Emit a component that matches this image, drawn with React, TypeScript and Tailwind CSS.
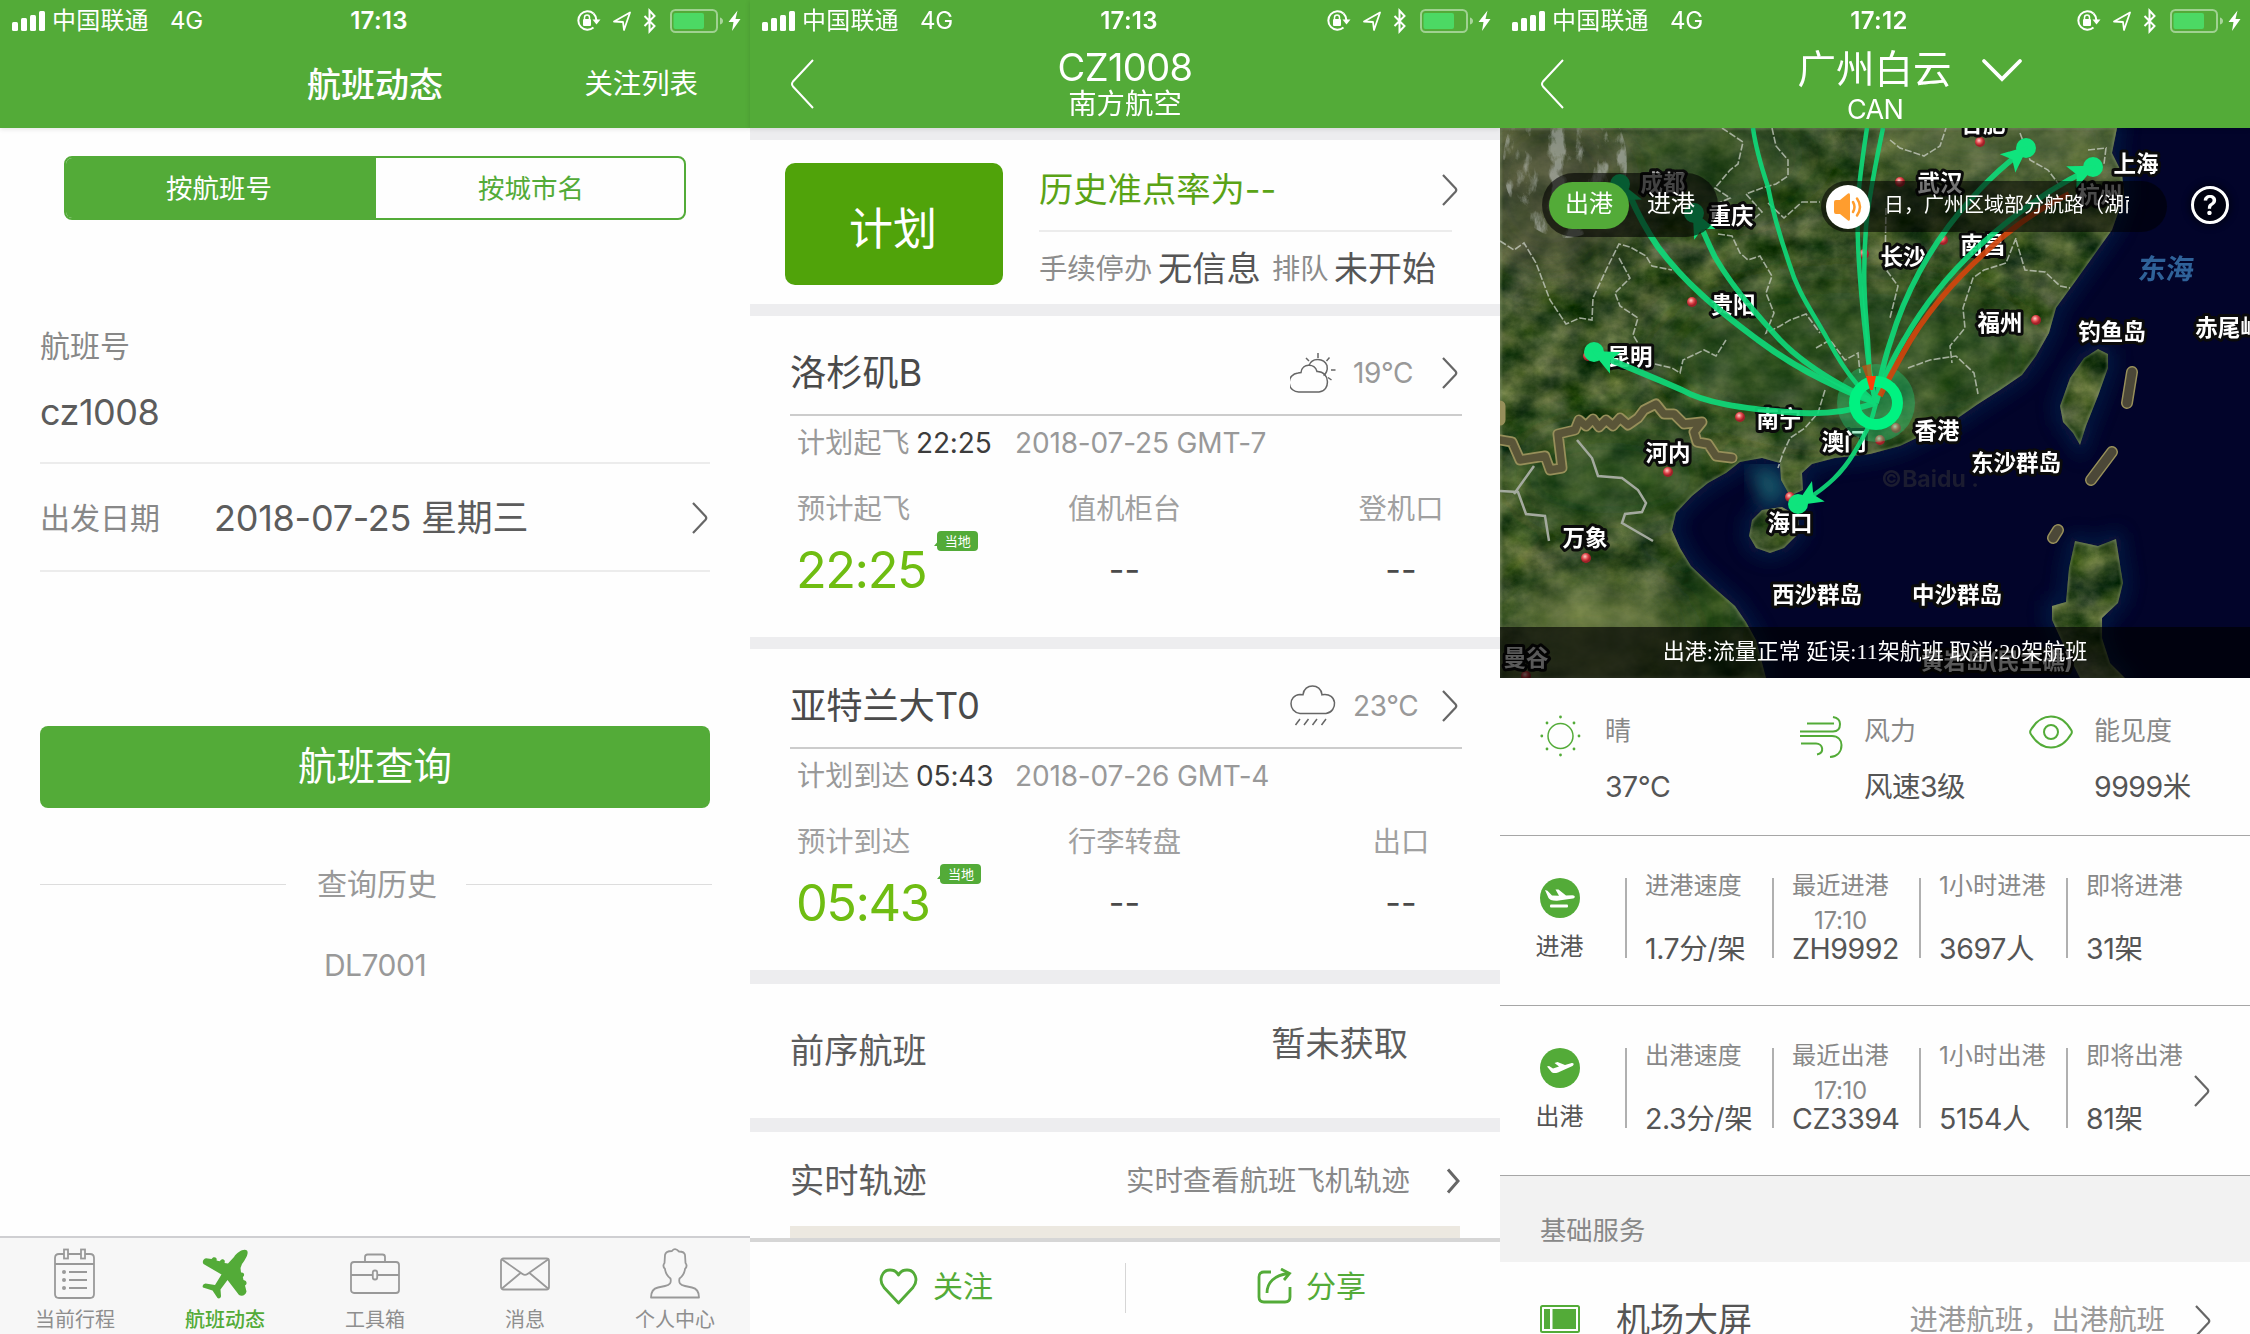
import type { ReactNode } from 'react';

/* ---------- shared pieces ---------- */

function ChevronRight({ className = '', width = 2.2 }: { className?: string; width?: number }) {
  return (
    <svg width="16" height="32" viewBox="0 0 16 32" fill="none" stroke="#666" strokeWidth={width} className={className}>
      <path d="M1 1 L13.5 14.2 Q15 16 13.5 17.8 L1 31" />
    </svg>
  );
}

function BackArrow() {
  return (
    <svg width="24" height="50" viewBox="0 0 24 50" fill="none" stroke="#fff" strokeWidth="2" className="absolute left-10 top-[59px]">
      <path d="M23 1 L3 22.5 Q1 25 3 27.5 L23 49" />
    </svg>
  );
}

function StatusBar({ time }: { time: string }) {
  return (
    <div className="flex h-[41px] items-center text-[24px] leading-none text-white">
      <svg width="33" height="20" viewBox="0 0 33 20" fill="#fff" className="ml-3 shrink-0">
        <rect x="0" y="11" width="6" height="9" rx="1.5" />
        <rect x="9" y="7" width="6" height="13" rx="1.5" />
        <rect x="18" y="4" width="6" height="16" rx="1.5" />
        <rect x="27" y="0" width="6" height="20" rx="1.5" />
      </svg>
      <span className="ml-[7px] w-[98px] shrink-0 tracking-[0.2px]">中国联通</span>
      <span className="ml-5 w-[60px] shrink-0 tracking-[-0.3px]">4G</span>
      <span className="ml-[116px] w-[66px] shrink-0 text-center font-semibold tracking-[0.3px]">{time}</span>
      <svg width="168" height="28" viewBox="0 0 168 28" fill="none" className="ml-[164px] shrink-0">
        <g stroke="#fff" strokeWidth="2">
          <path d="M17.5 6.5 A9.2 9.2 0 1 0 17.5 20.5" />
          <path d="M17.5 6.5 A9.2 9.2 0 0 1 20.3 13" />
        </g>
        <path d="M16.5 12.5 H24.5 L20.5 17.5 Z" fill="#fff" />
        <rect x="7" y="12" width="8" height="7" rx="1" fill="#fff" />
        <path d="M8.5 12 V10.5 A2.5 2.5 0 0 1 13.5 10.5 V12" stroke="#fff" strokeWidth="1.5" />
        <path d="M38 14.5 L54 5.5 L48 23 L47 15 Z" stroke="#fff" strokeWidth="1.8" strokeLinejoin="round" />
        <path d="M68.5 9 L78.5 19 L73.5 24.5 V3.5 L78.5 9 L68.5 19" stroke="#fff" strokeWidth="2" />
        <rect x="95" y="3" width="46" height="22" rx="4.5" stroke="#fff" strokeOpacity=".45" strokeWidth="2" />
        <rect x="97.5" y="6" width="30.5" height="16" rx="2" fill="#4cd964" />
        <path d="M144 10.5 Q147 11.5 147 14 Q147 16.5 144 17.5 Z" fill="#fff" fillOpacity=".5" />
        <path d="M161.5 3.5 L152.5 15 H157.5 L156 24 L164.5 12 H159.5 Z" fill="#fff" />
      </svg>
    </div>
  );
}

function Header({ time, back, children }: { time: string; back?: boolean; children: ReactNode }) {
  return (
    <header className="relative z-10 h-32 shrink-0 bg-[#53ab38] text-white shadow-[0_1px_5px_rgba(0,0,0,0.12)]">
      <StatusBar time={time} />
      {back && <BackArrow />}
      {children}
    </header>
  );
}

/* ---------- screen 1: flight search ---------- */

function CalendarIcon() {
  return (
    <svg width="42" height="52" viewBox="0 0 42 52" fill="none" stroke="#999" strokeWidth="1.8">
      <path d="M10 6 H5 Q1 6 1 10 V46 Q1 50 5 50 H36 Q40 50 40 46 V10 Q40 6 36 6 H31 M14 6 H27 M1 16 H40" />
      <rect x="10" y="1.5" width="4" height="9" />
      <rect x="27" y="1.5" width="4" height="9" />
      <path d="M15 24 H33 M15 32 H33 M15 40 H33" />
      <g fill="#999" stroke="none">
        <circle cx="10" cy="24" r="2" />
        <circle cx="10" cy="32" r="2" />
        <circle cx="10" cy="40" r="2" />
      </g>
    </svg>
  );
}

function PlaneIcon() {
  return (
    <svg width="46" height="50" viewBox="0 0 46 50" fill="#53ab38">
      <path d="M45 1.5 C42 -1 35 3 32 8 L26 14.5 L22.5 14 C23.5 11.5 22 9.5 19.5 10.5 L17.5 12.2 L14.5 11.5 C15.5 9 13 7.5 11 8.5 L9.5 10 L4 9.3 C1 10 0 13 1.5 15 L19.5 25.5 L13 36 L3.5 34.5 C1 35 0 37 1 38.5 L10.5 41.5 L15.5 49 C17 50 19 49 19 47 L18.5 40.5 L25.5 31 L37 46 C40 48 44 46 44.5 42.5 L43 36.5 C45.5 35 45 31.5 41.5 31 L40.8 28 C43 26.5 42.5 23 39 23.5 L38.5 19 L40 15 C44 10 47 4 45 1.5 Z" />
    </svg>
  );
}

function BriefcaseIcon() {
  return (
    <svg width="50" height="42" viewBox="0 0 50 42" fill="none" stroke="#999" strokeWidth="1.8">
      <rect x="1" y="9" width="48" height="31" rx="3" />
      <path d="M15 9 V4 Q15 1.5 17.5 1.5 H32.5 Q35 1.5 35 4 V9 M1 22 H22.5 M27.5 22 H49" />
      <rect x="22.8" y="17.5" width="4.4" height="9" rx="2" />
    </svg>
  );
}

function MailIcon() {
  return (
    <svg width="50" height="34" viewBox="0 0 50 34" fill="none" stroke="#999" strokeWidth="1.8">
      <rect x="1" y="1.5" width="48" height="31" rx="2.5" />
      <path d="M2 2.5 L22.5 17 Q25 18.8 27.5 17 L48 2.5 M2 31.5 L20.5 16 M48 31.5 L29.5 16" />
    </svg>
  );
}

function PersonIcon() {
  return (
    <svg width="50" height="51" viewBox="0 0 50 51" fill="none" stroke="#999" strokeWidth="1.8" strokeLinejoin="round">
      <path d="M20.5 30.5 C21.5 35 20 37 15 38 L8 39.5 C3 40.5 1 44 1 49.5 H49 C49 44 47 40.5 42 39.5 L35 38 C30 37 28.5 35 29.5 30.5 C33 28 34.5 25 35 21 C37 19 37 17 35.5 15 L35 7 C34.5 4 31 3.5 29 3.5 C26 .5 24 .5 22 3 C18 3 15.5 4 15 7 L14.5 15 C13 17 13 19 15 21 C15.5 25 17 28 20.5 30.5 Z" />
    </svg>
  );
}

const tabs = [
  { label: '当前行程', icon: <CalendarIcon />, active: false },
  { label: '航班动态', icon: <PlaneIcon />, active: true },
  { label: '工具箱', icon: <BriefcaseIcon />, active: false },
  { label: '消息', icon: <MailIcon />, active: false },
  { label: '个人中心', icon: <PersonIcon />, active: false },
];

function SearchScreen() {
  return (
    <section className="flex h-full w-[750px] shrink-0 flex-col bg-[#fefefe]">
      <Header time="17:13">
        <div className="grid h-[87px] grid-cols-[1fr_auto_1fr] items-center leading-none">
          <span />
          <h1 className="text-[34px] font-medium">航班动态</h1>
          <span className="mr-[52px] text-right text-[28.4px]">关注列表</span>
        </div>
      </Header>
      <div className="mx-16 mt-7 flex h-16 shrink-0 overflow-hidden rounded-lg border-2 border-[#53ab38] text-[26.5px] leading-[60px]">
        <div className="w-[310px] bg-[#53ab38] text-center text-white">
          <span className="mr-1">按航班号</span>
        </div>
        <div className="flex-1 pl-0.5 text-center text-[#53ab38]">按城市名</div>
      </div>
      <div className="mx-10 mt-[106px] flex h-[138px] shrink-0 flex-col border-b-2 border-[#ececec]">
        <span className="h-10 text-[30px] leading-10 text-[#888]">航班号</span>
        <span className="mt-[26px] text-[36px] leading-10 tracking-[-0.5px] text-[#5c5c5c]">cz1008</span>
      </div>
      <div className="mx-10 flex h-[108px] shrink-0 items-center border-b-2 border-[#ececec] pt-0.5 leading-none">
        <span className="w-[174px] text-[30px] text-[#888]">出发日期</span>
        <span className="text-[36px] tracking-[-0.25px] text-[#5c5c5c]">2018-07-25 星期三</span>
        <ChevronRight className="ml-auto mr-0.5" />
      </div>
      <div className="mx-10 mt-[154px] h-[82px] shrink-0 rounded-lg bg-[#53ab38] text-center text-[38.5px] leading-[81px] text-white">航班查询</div>
      <div className="mx-10 mt-[56px] flex h-10 shrink-0 items-center justify-between leading-none">
        <div className="h-px w-[246px] bg-[#ddd]" />
        <span className="pl-0.5 text-[30px] text-[#999]">查询历史</span>
        <div className="-mr-0.5 h-px w-[246px] bg-[#ddd]" />
      </div>
      <div className="mt-[41px] text-center text-[30px] leading-10 tracking-[-0.5px] text-[#999]">DL7001</div>
      <nav className="mt-auto grid h-[98px] shrink-0 grid-cols-5 border-t-2 border-[#cfcfd2] bg-[#f7f7f7]">
        {tabs.map((t) => (
          <div key={t.label} className="flex flex-col items-center">
            <div className="flex h-[71px] items-center">{t.icon}</div>
            <span className={t.active ? 'text-[20px] font-medium leading-[23px] text-[#53ab38]' : 'text-[20px] leading-[23px] text-[#8e8e8e]'}>{t.label}</span>
          </div>
        ))}
      </nav>
    </section>
  );
}

/* ---------- screen 2: flight detail ---------- */

function PartlyCloudyIcon() {
  return (
    <svg width="46" height="42" viewBox="0 0 46 42" fill="none" stroke="#666" strokeWidth="1.5">
      <path d="M9.5 40 A9.5 9.5 0 0 1 8 21 L11 20.5 C12 11 25 11 27 19.5 C40 19 41 39 29 40 Z" />
      <path d="M19 13.5 C22 5 34 6 37 13.5 C38 18 36 22 33.5 23.5 M28 1 V6 M16 6 L19 9 M39.5 5.5 L36.5 9 M41 18 H45.5 M38 25.5 L41.5 28" />
    </svg>
  );
}

function RainIcon() {
  return (
    <svg width="46" height="42" viewBox="0 0 46 42" fill="none" stroke="#666" strokeWidth="1.5">
      <path d="M10 28.5 C-2 27 -2 10 10 9.5 L13 9.8 C14 -2 31 -2 32 9.8 C48 7 48 27 36 28.5 Z" />
      <path d="M10 34 L5.5 40 M18.5 34 L14 40 M27 34 L22.5 40 M36 34 L31.5 40" />
    </svg>
  );
}

interface LegProps {
  city: string;
  icon: ReactNode;
  temp: string;
  kind: string;
  time: string;
  date: string;
  mid: string;
  last: string;
}

function Leg({ city, icon, temp, kind, time, date, mid, last }: LegProps) {
  return (
    <div className="flex h-[321px] shrink-0 flex-col bg-[#fefefe]">
      <div className="ml-10 mr-[38px] flex h-[100px] shrink-0 items-center border-b-2 border-[#ccc] pt-4 leading-none">
        <span className="text-[36.3px] tracking-[-0.1px] text-[#4a4a4a]">{city}</span>
        <span className="ml-auto">{icon}</span>
        <span className="ml-[17px] w-[70px] text-[28px] tracking-[-0.4px] text-[#999]">{temp}</span>
        <ChevronRight className="ml-[19px] mr-1" />
      </div>
      <div className="ml-[47px] flex h-[54px] items-center text-[28px] leading-none tracking-[-0.15px] text-[#999]">
        <span className="w-[119px] tracking-[0.2px]">计划{kind}</span>
        <span className="w-[99px] text-[#3c3c3c]">{time}</span>
        <span>{date}</span>
      </div>
      <div className="grid h-[78px] grid-cols-[206px_337px_216px] items-center text-[28.3px] leading-none text-[#a0a0a0]">
        <span className="pl-[47px]">预计{kind}</span>
        <span className="text-center">{mid}</span>
        <span className="text-center">{last}</span>
      </div>
      <div className="-mt-[13px] grid h-[70px] grid-cols-[206px_337px_216px] items-center leading-none">
        <div className="flex items-center pl-[46px]">
          <span className="whitespace-nowrap text-[50.5px] tracking-[-1.5px] text-[#6fbd12]">{time}</span>
          <div className="relative -mt-[59px] ml-[11px] h-5 w-[41px] shrink-0 rounded bg-[#53ab38] text-center text-[13px] leading-5 text-white">
            当地
            <svg width="8" height="8" viewBox="0 0 8 8" fill="#53ab38" className="absolute -left-[3px] bottom-1">
              <path d="M6 0 L0 7 H6 Z" />
            </svg>
          </div>
        </div>
        <span className="text-center text-[34px] text-[#4a4a4a]">--</span>
        <span className="text-center text-[34px] text-[#4a4a4a]">--</span>
      </div>
    </div>
  );
}

function DetailScreen() {
  return (
    <section className="flex h-full w-[750px] shrink-0 flex-col bg-[#ededef]">
      <Header time="17:13" back>
        <div className="flex flex-col items-center pt-[6px]">
          <h1 className="text-[38px] leading-[40px] tracking-[-0.6px]">CZ1008</h1>
          <span className="text-[28.4px] leading-[34px]">南方航空</span>
        </div>
      </Header>
      <div className="mb-3 mt-3 flex h-[164px] shrink-0 bg-[#fefefe] pl-[35px]">
        <div className="mt-[23px] h-[122px] w-[218px] shrink-0 rounded-[10px] bg-[#50a30a] pr-0.5 text-center text-[44px] leading-[132px] text-white">计划</div>
        <div className="ml-9 w-[413px]">
          <div className="mt-2 flex h-[84px] items-center justify-between border-b-2 border-[#ececec] pt-0.5 leading-none">
            <span className="text-[34.3px] text-[#5aa316]">历史准点率为--</span>
            <ChevronRight className="-mr-1.5" />
          </div>
          <div className="flex h-[74px] items-center whitespace-nowrap text-[28.3px] leading-none text-[#8c8c8c]">
            <span className="w-[119px]">手续停办</span>
            <span className="w-[114px] text-[34.3px] text-[#555]">无信息</span>
            <span className="w-[62px]">排队</span>
            <span className="text-[34px] text-[#555]">未开始</span>
          </div>
        </div>
      </div>
      <Leg city="洛杉矶B" icon={<PartlyCloudyIcon />} temp="19°C" kind="起飞" time="22:25" date="2018-07-25 GMT-7" mid="值机柜台" last="登机口" />
      <div className="h-3 shrink-0" />
      <Leg city="亚特兰大T0" icon={<RainIcon />} temp="23°C" kind="到达" time="05:43" date="2018-07-26 GMT-4" mid="行李转盘" last="出口" />
      <div className="mt-3.5 flex h-[134px] shrink-0 justify-between bg-[#fefefe] pl-10 pr-[92px] text-[34.2px] text-[#5c5c5c]">
        <span className="leading-[134px]">前序航班</span>
        <span className="leading-[120px]">暂未获取</span>
      </div>
      <div className="mt-3.5 h-[106px] shrink-0 bg-[#fefefe]">
        <div className="flex h-[94px] items-center pl-10 pt-1 leading-none">
          <span className="text-[34.2px] text-[#5c5c5c]">实时轨迹</span>
          <span className="ml-auto text-[28.4px] text-[#888]">实时查看航班飞机轨迹</span>
          <svg width="15" height="26" viewBox="0 0 15 26" fill="none" stroke="#666" strokeWidth="3" className="ml-9 mr-[39px]">
            <path d="M2 1.5 L12 13 L2 24.5" />
          </svg>
        </div>
        <div className="mx-10 h-3 bg-[#ece8e0]" />
      </div>
      <div className="grid h-24 shrink-0 grid-cols-[1fr_2px_1fr] border-t-4 border-[#d6d6d6] bg-[#fefefe] text-[30px] leading-none text-[#53ab38]">
        <div className="flex h-[88px] items-center pl-[129px]">
          <svg width="39" height="37" viewBox="0 0 39 37" fill="none" stroke="#53ab38" strokeWidth="2.8" strokeLinejoin="round">
            <path d="M19.5 35 L5 19.5 C-1 12 3 2 11 2 C15 2 18 4 19.5 7 C21 4 24 2 28 2 C36 2 40 12 34 19.5 Z" />
          </svg>
          <span className="ml-[15px]">关注</span>
        </div>
        <div className="ml-px mt-[21px] h-[50px] bg-[#d6d6d6]" />
        <div className="flex h-[88px] items-center pl-[131px]">
          <svg width="35" height="36" viewBox="0 0 35 36" fill="none" stroke="#53ab38" strokeWidth="2.8">
            <path d="M14 4 H7 Q2 4 2 9 V29 Q2 34 7 34 H28 Q33 34 33 29 V19" />
            <path d="M10 25 C10 15 17 7 32 5.5 M24 1 L32.5 5.5 L27 12" />
          </svg>
          <span className="ml-[14px]">分享</span>
        </div>
      </div>
    </section>
  );
}

/* ---------- screen 3: airport ---------- */

const cityLabels: { t: string; x: number; y: number; dim?: boolean }[] = [
  { t: '合肥', x: 483, y: -5 },
  { t: '成都', x: 163, y: 54, dim: true },
  { t: '武汉', x: 440, y: 54 },
  { t: '重庆', x: 231, y: 87 },
  { t: '上海', x: 636, y: 35 },
  { t: '杭州', x: 600, y: 66, dim: true },
  { t: '长沙', x: 403, y: 128 },
  { t: '南昌', x: 483, y: 116 },
  { t: '贵阳', x: 233, y: 176 },
  { t: '福州', x: 500, y: 194 },
  { t: '钓鱼岛', x: 612, y: 203 },
  { t: '赤尾屿', x: 729, y: 199 },
  { t: '昆明', x: 130, y: 228 },
  { t: '南宁', x: 279, y: 290 },
  { t: '河内', x: 168, y: 324 },
  { t: '澳门', x: 344, y: 313 },
  { t: '香港', x: 437, y: 302 },
  { t: '东沙群岛', x: 516, y: 334 },
  { t: '海口', x: 290, y: 394 },
  { t: '万象', x: 85, y: 409 },
  { t: '西沙群岛', x: 317, y: 466 },
  { t: '中沙群岛', x: 457, y: 466 },
  { t: '曼谷', x: 26, y: 529 },
  { t: '黄岩岛(民主礁)', x: 497, y: 532 },
];

const cityDots = [
  [480, 14], [400, 54], [443, 112], [364, 126], [192, 174], [536, 192], [240, 289], [168, 344], [380, 312], [396, 300], [290, 369], [86, 430], [88, 228], [26, 548],
];

const routes = [
  { d: 'M376 275 C330 258 290 236 258 212 C215 180 185 155 158 119 C145 100 136 82 130 68', w: 6 },
  { d: 'M376 275 C340 258 305 238 280 212 C250 180 230 155 215 129 C208 115 204 105 200 96', w: 5.5 },
  { d: 'M376 275 C355 258 340 235 328 212 C310 180 298 165 289 135 C277 100 272 80 268 59 C260 35 255 15 253 0', w: 4.5 },
  { d: 'M376 275 C370 255 368 235 366 212 C360 160 356 115 358 72 C360 45 364 20 367 0', w: 4.5 },
  { d: 'M376 275 C370 255 369 235 368 212 C364 170 363 140 366 99 C370 60 378 25 383 0', w: 4.5 },
  { d: 'M376 275 C380 250 384 232 391 212 C405 165 430 120 459 85 C480 60 495 45 520 25', w: 5.5 },
  { d: 'M376 275 C383 250 392 232 404 212 C425 175 450 145 478 119 C510 90 550 60 588 42', w: 5.5 },
  { d: 'M376 275 C345 285 315 287 287 284 C240 280 205 275 182 262 C150 248 125 238 106 230', w: 6 },
  { d: 'M376 275 C372 295 364 308 354 325 C342 345 328 358 306 372', w: 4.5 },
];

const arrows = [
  { x: 526, y: 20, a: -40 },
  { x: 593, y: 39, a: -25 },
  { x: 94, y: 224, a: 207 },
  { x: 298, y: 376, a: 148 },
  { x: 120, y: 56, a: 242 },
  { x: 194, y: 85, a: 243 },
];

const landPaths = (
  <>
    <path d="M0 0 H617 L612 25 L622 45 L624 68 L612 102 L592 130 L572 158 L556 180 L549 205 L536 228 L522 247 L500 262 L478 276 L455 292 L425 306 L400 318 L370 326 L335 330 L312 336 L302 345 L303 362 L290 368 L281 352 L280 335 L262 330 L240 334 L226 345 L208 355 L192 368 L176 385 L172 402 L180 420 L191 438 L212 458 L235 478 L246 494 L256 512 L266 550 H0 Z" />
    <path d="M252 392 L262 382 L282 379 L298 388 L299 405 L284 420 L270 425 L256 420 L249 408 Z" />
    <path d="M598 221 L608 226 L608 240 L598 268 L586 298 L580 317 L573 305 L563 294 L560 278 L570 250 L584 230 Z" />
    <path d="M575 413 L598 418 L616 411 L619 430 L623 455 L618 475 L602 490 L602 510 L610 535 L625 550 H580 L565 520 L552 492 L552 478 L566 474 L569 440 Z" />
  </>
);

const frontier =
  'M0 312 L12 314 L20 332 L45 328 L50 342 L62 340 L58 306 L75 302 L79 292 L86 298 L93 291 L99 299 L106 292 L113 298 L120 290 L128 297 L138 290 L144 282 L156 276 L164 286 L174 286 L184 296 L202 294 L194 304 L197 314 L208 316 L216 328 L232 330';

function FlightMap() {
  return (
    <svg width="750" height="550" viewBox="0 0 750 550" className="absolute inset-0">
      <defs>
        <filter id="terrain" x="0" y="0" width="100%" height="100%" colorInterpolationFilters="sRGB">
          <feTurbulence type="fractalNoise" baseFrequency="0.03 0.036" numOctaves="6" seed="11" />
          <feColorMatrix values="0.62 0.12 0 0 -0.14  0.5 0.16 0 0 -0.01  0.42 0 0.1 0 -0.11  0 0 0 0 1" />
          <feComposite in2="SourceGraphic" operator="in" />
        </filter>
        <filter id="snow" x="0" y="0" width="100%" height="100%" colorInterpolationFilters="sRGB">
          <feTurbulence type="fractalNoise" baseFrequency="0.06 0.03" numOctaves="5" seed="4" />
          <feColorMatrix values="0 0 0 0 0.72  0 0 0 0 0.74  0 0 0 0 0.72  6 0 0 0 -3.1" />
          <feComposite in2="SourceGraphic" operator="in" />
        </filter>
        <filter id="soft"><feGaussianBlur stdDeviation="9" /></filter>
        <filter id="soft2"><feGaussianBlur stdDeviation="1.2" /></filter>
        <filter id="soft3"><feGaussianBlur stdDeviation="22" /></filter>
        <clipPath id="land">{landPaths}</clipPath>
        <radialGradient id="pin" cx=".4" cy=".35"><stop offset="0" stopColor="#ffd0c8" /><stop offset=".6" stopColor="#e0454a" /><stop offset="1" stopColor="#a02028" /></radialGradient>
      </defs>
      <rect width="750" height="550" fill="#02042a" />
      <g filter="url(#soft)" fill="none" stroke="#0a2c55" strokeWidth="12" opacity=".7">{landPaths}</g>
      <path d="M248 340 L275 340 L288 366 L264 380 Z" fill="#1d6b78" opacity=".8" filter="url(#soft)" />
      <g filter="url(#terrain)" fill="#fff">{landPaths}</g>
      <g clipPath="url(#land)">
        <g filter="url(#soft3)">
          <ellipse cx="50" cy="60" rx="80" ry="90" fill="#57523f" opacity=".6" />
          <ellipse cx="220" cy="30" rx="100" ry="60" fill="#2c4a22" opacity=".45" />
          <ellipse cx="500" cy="10" rx="140" ry="40" fill="#6d7a50" opacity=".6" />
          <ellipse cx="350" cy="230" rx="190" ry="80" fill="#2d5420" opacity=".45" />
          <ellipse cx="90" cy="510" rx="80" ry="60" fill="#728049" opacity=".7" />
          <ellipse cx="205" cy="490" rx="40" ry="70" fill="#1f4218" opacity=".6" />
          <ellipse cx="110" cy="350" rx="100" ry="50" fill="#2d5220" opacity=".5" />
        </g>
        <ellipse cx="65" cy="35" rx="62" ry="75" fill="#fff" filter="url(#snow)" opacity=".6" />
        <g filter="url(#soft2)" fill="none" stroke="#8d9c76" strokeWidth="3" opacity=".5">{landPaths}</g>
      </g>

      {/* provincial and national borders */}
      <g fill="none" stroke="#c9cfc4" strokeOpacity=".75" strokeWidth="1.6" strokeDasharray="7 2">
        <path d="M0 113 L14 122 L24 115 L36 135 L50 172 L66 196 L80 190 L92 192 L93 170 L107 140 L113 128 L119 116 L130 119 L146 128 L152 138 L172 142 M119 130 L130 150 L115 165 L120 178 L138 190 L133 207 L150 235 L172 240 L180 245 L183 232 L204 222 L216 228 L226 212" />
        <path d="M222 0 L243 14 L238 36 L230 42 L215 60 L230 70 L212 78 M272 0 L276 18 L288 32 L288 48 L276 56 L262 60 L246 66 L262 84 L246 97 L232 96 M268 75 L284 90 L302 74 L320 74" />
        <path d="M218 106 L232 108 L240 125 L248 132 L260 128 L272 148 L266 165 L274 185 L266 205 L280 198 L290 192 L306 186 L320 205 M390 12 L400 20 L424 28 L440 18 L446 0 M520 5 L530 32 L548 42 L560 58 L545 68 M588 22 L606 20 L604 36" />
        <path d="M516 110 L506 135 L484 142 L473 150 L463 180 L465 200 L450 218 L452 235 M516 112 L525 142 L545 144 L560 158 L570 160 M386 80 L385 140 L398 158 L390 190 M316 220 L330 212 L345 232 L358 225 L360 245 M408 240 L430 232 L456 228 L474 245 L478 266" />
        <path d="M325 262 L318 285 L305 300 L290 310 L283 325 L278 340" />
      </g>
      <g fill="none" stroke="#a4aa9f" strokeWidth="2.5">
        <path d="M77 312 L92 330 L98 348 L122 350 L138 362 L146 375 L142 384 L125 386 L122 395 L153 413 M0 363 L18 364 L26 386 L45 388 L49 413 M34 338 L14 366" />
      </g>
      <g fill="none" strokeLinecap="round" strokeLinejoin="round">
        <path d={frontier} stroke="#978f5a" strokeWidth="11" />
        <path d={frontier} stroke="#5a5538" strokeWidth="7.5" />
        <path d="M0 278 V292" stroke="#978f5a" strokeWidth="11" />
        <path d="M632 244 L627 275 M612 324 L591 352 M558 402 L553 410" stroke="#978f5a" strokeWidth="12" />
        <path d="M632 244 L627 275 M612 324 L591 352 M558 402 L553 410" stroke="#4c4838" strokeWidth="9" />
      </g>

      {cityDots.map(([x, y]) => (
        <circle key={`${x}-${y}`} cx={x} cy={y} r="5" fill="url(#pin)" />
      ))}
      <g fontFamily="Inter, 'Noto Sans CJK SC', sans-serif" fontWeight="700" textAnchor="middle">
        <text x="430" y="359" fontSize="23" fill="#1b1c30">©Baidu .</text>
        <text x="666" y="151" fontSize="28" fill="#2f6299" transform="skewX(-6) translate(15 0)">东海</text>
        {cityLabels.map((c) => (
          <text key={c.t} x={c.x} y={c.y + 8.5} fontSize="22.5" fill={c.dim ? '#a5a5a5' : '#fff'} stroke="#0b0b0b" strokeWidth="6" strokeLinejoin="round" paintOrder="stroke">
            {c.t}
          </text>
        ))}
      </g>

      {/* routes out of the hub */}
      <circle cx="376" cy="275" r="39" fill="#1fd07a" fillOpacity=".38" />
      <g fill="none" stroke="#0fd878" strokeOpacity=".92">
        {routes.map((r) => (
          <path key={r.d} d={r.d} strokeWidth={r.w} />
        ))}
        <path d="M380 268 C390 248 399 232 410 213 C436 171 466 141 498 113 C521 93 546 77 569 66" stroke="#d1440c" strokeWidth="5.5" />
      </g>
      {arrows.map((p) => (
        <g key={`${p.x}`} transform={`translate(${p.x} ${p.y})`} fill="#0fe47d">
          <circle r="10" />
          <path transform={`rotate(${p.a})`} d="M3 0 L-24 -12 L-18 0 L-24 12 Z" />
        </g>
      ))}
      <circle cx="376" cy="275" r="21.5" fill="none" stroke="#00f281" strokeWidth="11" />
      <path d="M362 238 L371 236 L372 248 L366 249 Z" fill="#d1440c" fillOpacity=".7" />
      <path d="M366 248 L376 248 L373 262 L370 262 Z" fill="#ff3d08" />
    </svg>
  );
}

function MapPanel() {
  return (
    <div className="relative h-[550px] shrink-0 overflow-hidden">
      <FlightMap />
      <div className="absolute left-[42px] top-[45px] flex h-16 w-[176px] items-center rounded-full bg-black/60 pl-[7px] text-[24px] leading-none text-white">
        <span className="h-[47px] w-20 rounded-full bg-[#53ab38] text-center leading-[44px]">出港</span>
        <span className="-mt-[3px] ml-[18px]">进港</span>
      </div>
      <div className="absolute left-[321px] top-[53px] flex h-[51px] w-[346px] items-center rounded-full bg-black/55 pl-[5px] text-white">
        <svg width="44" height="44" viewBox="0 0 44 44" className="shrink-0">
          <circle cx="22" cy="22" r="22" fill="#fff" />
          <path d="M8 17 Q8 15 10 15 H14 L22 8.5 Q24 7.5 24 10 V34 Q24 36.5 22 35.5 L14 29 H10 Q8 29 8 27 Z" fill="#ff9d2e" />
          <path d="M27 17 Q30 22 27 27 M31 13.5 Q37 22 31 30.5" fill="none" stroke="#ff9d2e" strokeWidth="2.5" strokeLinecap="round" />
        </svg>
        <span className="-mt-1 ml-[14px] w-[245px] overflow-hidden whitespace-nowrap text-[20px] leading-7">日，广州区域部分航路（湖南</span>
      </div>
      <div className="absolute left-[691px] top-[58px] size-[38px] rounded-full border-[3px] border-white bg-black/60 text-center text-[27px] font-semibold leading-[33px] text-white shadow-[0_0_6px_3px_rgba(0,0,0,0.4)]">?</div>
      <div className="absolute inset-x-0 bottom-0 h-[51px] bg-black/65 text-center font-['Liberation_Serif','Noto_Sans_CJK_SC',serif] text-[22px] leading-[50px] text-white">
        出港:流量正常 延误:11架航班 取消:20架航班
      </div>
    </div>
  );
}

function SunIcon() {
  return (
    <svg width="42" height="42" viewBox="0 0 42 42" fill="none" stroke="#53ab38" strokeWidth="1.5">
      <circle cx="20.5" cy="21" r="12.5" />
      <g fill="#53ab38" stroke="none">
        <circle cx="20.5" cy="2" r="1.4" /><circle cx="20.5" cy="40" r="1.4" /><circle cx="1.8" cy="21" r="1.4" /><circle cx="39" cy="21" r="1.4" />
        <circle cx="7" cy="8" r="1.4" /><circle cx="34" cy="8" r="1.4" /><circle cx="7" cy="34" r="1.4" /><circle cx="34" cy="34" r="1.4" />
      </g>
    </svg>
  );
}

function WindIcon() {
  return (
    <svg width="44" height="44" viewBox="0 0 44 44" fill="none" stroke="#53ab38" strokeWidth="2">
      <path d="M8 8.5 H35 M34 2 C39 3 41 6 41 9 C41 14 38 16.5 34 16.5 H1 M1 21 H33 C39 21 42.5 25 42.5 30 C42.5 37 38 41.5 31 42 M2 28.5 H17 C24 28.5 26 38 18 39.5" />
    </svg>
  );
}

function EyeIcon() {
  return (
    <svg width="44" height="34" viewBox="0 0 44 34" fill="none" stroke="#53ab38" strokeWidth="2">
      <path d="M1.5 15.5 C7 6 14 1.5 22 1.5 C30 1.5 37 6 42.5 15.5 Q43.2 17 42.5 18.5 C37 28 30 32.5 22 32.5 C14 32.5 7 28 1.5 18.5 Q.8 17 1.5 15.5 Z" />
      <circle cx="22" cy="17" r="7" />
    </svg>
  );
}

function WeatherItem({ icon, label, value, className }: { icon: ReactNode; label: string; value: string; className: string }) {
  return (
    <div className={className}>
      <div className="w-[65px] shrink-0">{icon}</div>
      <div className="-mt-0.5 flex flex-col whitespace-nowrap">
        <span className="text-[26px] leading-9 text-[#888]">{label}</span>
        <span className="mt-5 text-[28.5px] leading-9 tracking-[-0.5px] text-[#555]">{value}</span>
      </div>
    </div>
  );
}

function PlaneBadge({ landing }: { landing?: boolean }) {
  return (
    <svg width="40" height="40" viewBox="0 0 40 40" fill="#fff">
      <circle cx="20" cy="20" r="20" fill="#53ab38" />
      {landing ? (
        <>
          <path d="M5 12 L7.5 12.8 L12 17.5 L19 17.8 L15.5 11.5 L18.5 11.5 L26 17.5 L32.5 17.2 C35.5 17.5 35.5 20 33 20.5 L17 22.8 C12 23 9.5 21.5 8.5 20 Z" />
          <rect x="10" y="26.5" width="18" height="3" rx="1" />
        </>
      ) : (
        <path d="M7 18.5 L9 18 L13 20.5 L19 18.5 L14.5 15 L17.5 14 L25 17 L31 15.2 C34 14.5 34.5 16.8 32.5 18 L18 24.5 C14.5 25.5 12.5 25 11.5 24 Z" />
      )}
    </svg>
  );
}

function Traffic({ landing, cells }: { landing?: boolean; cells: string[][] }) {
  return (
    <div className="relative flex h-[170px] shrink-0 border-t border-[#a6a6a6] bg-[#fefefe]">
      <div className="flex w-[119px] shrink-0 flex-col items-center pt-[42px]">
        <PlaneBadge landing={landing} />
        <span className="mt-[13px] text-[24px] leading-8 text-[#555]">{landing ? '进港' : '出港'}</span>
      </div>
      <div className="ml-[6px] mt-[42px] flex h-20">
        {cells.map(([label, sub, value]) => (
          <div key={label} className="flex w-[147px] shrink-0 flex-col whitespace-nowrap border-l-2 border-[#b0b0b0] pl-[18px]">
            <span className="-mt-2.5 h-9 shrink-0 text-[24.2px] leading-9 text-[#888]">{label}</span>
            <span className="h-8 w-[97px] shrink-0 text-center text-[24px] leading-[33px] tracking-[-0.3px] text-[#888]">{sub}</span>
            <span className="-mt-[5px] text-[28.5px] leading-9 tracking-[-0.4px] text-[#555]">{value}</span>
          </div>
        ))}
      </div>
      {!landing && <ChevronRight className="absolute right-[40px] top-[69px]" />}
    </div>
  );
}

function AirportScreen() {
  return (
    <section className="flex h-full w-[750px] shrink-0 flex-col overflow-hidden bg-[#fefefe]">
      <Header time="17:12" back>
        <div className="flex flex-col items-center">
          <div className="flex h-[57px] items-center">
            <h1 className="ml-[70px] text-[38.5px] leading-none">广州白云</h1>
            <svg width="42" height="24" viewBox="0 0 42 24" fill="none" stroke="#fff" strokeWidth="3.8" strokeLinecap="round" className="ml-[29px]">
              <path d="M3 3 L21 21 L39 3" />
            </svg>
          </div>
          <span className="-mt-0.5 text-[27px] leading-7 tracking-[-0.7px]">CAN</span>
        </div>
      </Header>
      <MapPanel />
      <div className="flex h-[157px] shrink-0 pt-[37px]">
        <WeatherItem className="flex w-[259px] pl-10" icon={<SunIcon />} label="晴" value="37°C" />
        <WeatherItem className="flex w-[230px] pl-10" icon={<WindIcon />} label="风力" value="风速3级" />
        <WeatherItem className="flex w-[220px] pl-10" icon={<EyeIcon />} label="能见度" value="9999米" />
      </div>
      <Traffic landing cells={[['进港速度', '', '1.7分/架'], ['最近进港', '17:10', 'ZH9992'], ['1小时进港', '', '3697人'], ['即将进港', '', '31架']]} />
      <Traffic cells={[['出港速度', '', '2.3分/架'], ['最近出港', '17:10', 'CZ3394'], ['1小时出港', '', '5154人'], ['即将出港', '', '81架']]} />
      <div className="h-[87px] shrink-0 border-t border-[#a6a6a6] bg-[#f2f2f2] pl-10 pt-[37px] text-[26.3px] leading-9 text-[#888]">基础服务</div>
      <div className="flex h-[114px] shrink-0 items-center pl-10 leading-none">
        <svg width="40" height="32" viewBox="0 0 40 32" fill="none" className="mt-1">
          <rect x="1" y="1" width="38" height="26" rx="1.5" stroke="#53ab38" strokeWidth="2" />
          <path d="M4 4 H10 V24 H4 Z M12.5 4 H36 V24 H12.5 Z" fill="#53ab38" />
          <path d="M5 31 H35" stroke="#53ab38" strokeWidth="2" />
        </svg>
        <span className="ml-9 mt-0.5 text-[34px] text-[#555]">机场大屏</span>
        <span className="ml-auto mt-0.5 text-[28.4px] text-[#999]">进港航班，出港航班</span>
        <ChevronRight className="ml-[30px] mr-[39px] mt-1" />
      </div>
    </section>
  );
}

export default function App() {
  return (
    <main className="flex h-[1334px] w-[2250px] overflow-hidden font-[Inter,'Noto_Sans_CJK_SC',sans-serif]">
      <SearchScreen />
      <DetailScreen />
      <AirportScreen />
    </main>
  );
}
